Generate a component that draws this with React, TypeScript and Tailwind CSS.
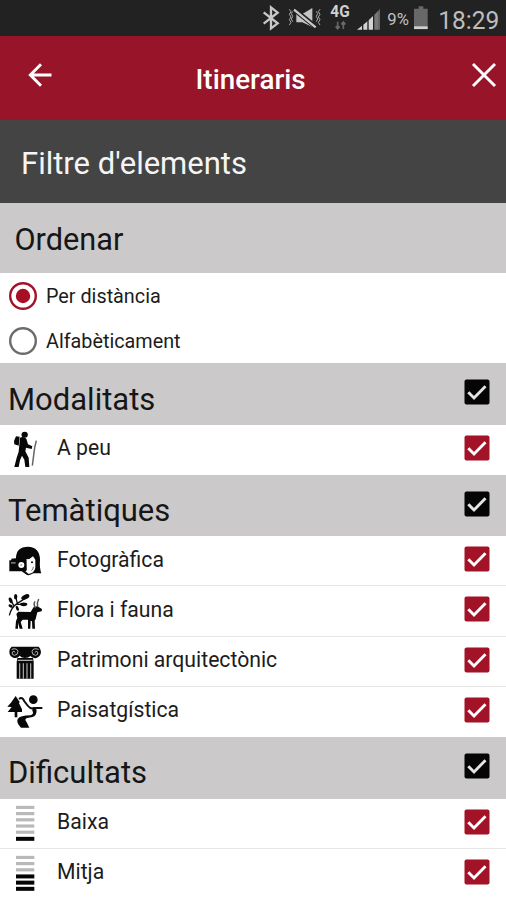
import type { ReactNode } from 'react';

function StatusBar() {
  return (
    <div className="flex h-9 items-center bg-[#222222] text-[#c4c4c4]">
      <svg className="h-9 w-[128px] ml-[250px] shrink-0" viewBox="0 0 384 108" fill="none">
        <path d="M41 37 L83 70 L63 85 V22 L83 38 L41 71" stroke="#c8c8c8" strokeWidth="7" />
        <path d="M118 28 l5 7 l-5 8 l5 8 l-5 8 l5 8 l-5 8 M128 34 l-4 7 l4 8 l-4 8 l4 8 M210 28 l-5 7 l5 8 l-5 8 l5 8 l-5 8 l5 8 M199 34 l4 7 l-4 8 l4 8 l-4 8" stroke="#aaa" strokeWidth="3" />
        <path d="M139 42 h18 l30 -18 v57 l-30 -14 h-18z" fill="#c4c4c4" />
        <path d="M132 28 L199 82" stroke="#222" strokeWidth="15" />
        <path d="M132 29 L197 82" stroke="#c8c8c8" strokeWidth="7" />
        <text x="241" y="52" fill="#d0d0d0" fontFamily="Roboto, sans-serif" fontSize="48" fontWeight="700" textLength="58" lengthAdjust="spacingAndGlyphs">4G</text>
        <path d="M263 65 v21 M257 79 l6 7 l6 -7 M280 87 v-21 M274 73 l6 -7 l6 7" stroke="#686868" strokeWidth="5" />
        <path d="M321 89 L336 77 V89z M340 74 L352 64 V89 H340z M356 61 L369 48 V89 H356z" fill="#d2d2d2" />
        <path d="M373 44 L384 33 V89 H373z" fill="#777" />
      </svg>
      <svg className="h-9 w-[128px] shrink-0" viewBox="0 0 384 108">
        <path d="M0 34 L6 26 V89 H0z" fill="#666" />
        <text x="28" y="74" fill="#c0c0c0" fontFamily="Roboto, sans-serif" fontSize="50">9%</text>
        <path d="M108 26 h14 v-7 h14 v7 h13 v62 h-41z" fill="#686868" />
        <path d="M108 79 h41 v8 h-41z" fill="#d0d0d0" />
        <text x="181" y="86" fill="#bdbdbd" fontFamily="Roboto, sans-serif" fontSize="79" textLength="183" lengthAdjust="spacingAndGlyphs">18:29</text>
      </svg>
    </div>
  );
}

function Check({ dark = false }: { dark?: boolean }) {
  return (
    <svg className="h-[26px] w-[26px] shrink-0" viewBox="0 0 26 26" fill="none">
      <rect x="0.5" y="0.5" width="25" height="25" rx="2" fill={dark ? '#050505' : '#a31328'} />
      <path d="M4.3 13.3 L10 19 L21.5 7.2" stroke={dark ? '#e4e4e4' : '#ffffff'} strokeWidth="2.9" />
    </svg>
  );
}

function Radio({ checked = false }: { checked?: boolean }) {
  return (
    <svg className="h-7 w-7 shrink-0" viewBox="0 0 28 28" fill="none">
      <circle cx="14" cy="14" r="12.8" stroke={checked ? '#a31328' : '#6c6c6c'} strokeWidth="2.4" />
      {checked && <circle cx="14" cy="14" r="7.2" fill="#a80f26" />}
    </svg>
  );
}

function SectionHeader({ title, height, top = 'pt-4' }: { title: string; height: string; top?: string }) {
  return (
    <div className={`flex items-start justify-between bg-[#cbc9ca] pl-2 pr-4 ${height}`}>
      <h2 className={`text-[31px] leading-10 text-[#161616] ${top}`}>{title}</h2>
      <div className="pt-4">
        <Check dark />
      </div>
    </div>
  );
}

function Row({ icon, label, height = 'h-[50px]', top = 'pt-2', last = false }: { icon: ReactNode; label: string; height?: string; top?: string; last?: boolean }) {
  return (
    <div className={`flex items-start bg-white pr-4 ${height} ${last ? '' : 'border-b border-[#e6e6e6]'}`}>
      {icon}
      <span className={`grow pl-[7px] text-[21.2px] leading-[30px] text-[#1c1c1c] ${top}`}>{label}</span>
      <div className="pt-[10px]">
        <Check />
      </div>
    </div>
  );
}

function Icon({ viewBox, children }: { viewBox: string; children: ReactNode }) {
  return (
    <svg className="h-[50px] w-[50px] shrink-0" viewBox={viewBox} fill="#080808">
      {children}
    </svg>
  );
}

const hiker = (
  <Icon viewBox="0 195 150 150">
    <ellipse cx="74" cy="224" rx="9.5" ry="9" />
    <path d="M48 229 L59 230 L56 257 L43 253 L42 243z" />
    <path d="M60 233 Q71 228 79 236 L84 253 L97 259 L95 267 L78 263 L76 274 L86 293 L88 321 H76 L73 299 L66 287 L60 301 L56 321 H43 L50 293 L56 275z" />
    <path d="M109 242 L104 263 L97 317" fill="none" stroke="#666" strokeWidth="4.5" />
  </Icon>
);

const photographer = (
  <Icon viewBox="0 -12 150 150">
    <path d="M48 55 Q48 20 84 20 Q119 21 120 59 Q118 84 124 100 H100 Q91 107 81 105 L65 94 H28 V61 H34 V56z" />
    <path d="M79 58 Q91 58 99 49 L106 59 L106 84 Q102 100 86 102 L76 94 L80 90z" fill="#fff" />
    <rect x="48" y="60" width="31" height="33" />
    <circle cx="64" cy="75" r="9" fill="#fff" />
    <circle cx="64" cy="75" r="3" fill="#aaa" />
    <path d="M33 66 h14 v5 h-14z" fill="#777" />
    <circle cx="96" cy="67" r="3" />
    <path d="M100 80 Q100 88 94 92" stroke="#777" strokeWidth="3" fill="none" />
  </Icon>
);

const nature = (
  <Icon viewBox="0 -12 150 150">
    <path d="M28 76 Q34 52 51 41 L79 23 M43 49 L32 31 M52 41 L47 19 M50 43 L76 43" fill="none" stroke="#111" strokeWidth="4" />
    <ellipse cx="32" cy="31" rx="5" ry="9" transform="rotate(-24 32 31)" />
    <ellipse cx="47" cy="20" rx="5" ry="8" />
    <ellipse cx="76" cy="21" rx="13" ry="7" transform="rotate(-25 76 21)" />
    <ellipse cx="71" cy="43" rx="11" ry="5.5" />
    <ellipse cx="52" cy="55" rx="4" ry="8" transform="rotate(-25 52 55)" />
    <ellipse cx="32" cy="48" rx="7" ry="4" transform="rotate(28 32 48)" />
    <path d="M49 72 L55 65 L92 66 L101 51 L112 49 L126 57 L125 64 L112 67 L107 87 L104 92 L105 116 H97 L96 94 L92 92 L91 116 H84 L84 89 H68 L62 96 L68 116 H59 L54 98 L54 116 H46 L48 93 L52 84z" />
    <path d="M107 54 Q99 43 105 34 M113 51 Q110 38 116 27" fill="none" stroke="#555" strokeWidth="4.5" />
  </Icon>
);

const column = (
  <Icon viewBox="0 -9 150 150">
    <path d="M35 20 H116 Q123 27 123 36 Q122 49 109 54 Q98 56 91 48 Q86 54 75 54 Q64 54 59 47 Q54 56 42 54 Q28 50 28 36 Q28 25 35 20z" />
    <path d="M35 28 Q51 23 54 34 Q54 46 43 46 Q34 45 37 36 Q42 31 46 38 M116 28 Q99 23 96 34 Q96 46 107 46 Q116 45 113 36 Q108 31 104 38" fill="none" stroke="#b4b4b4" strokeWidth="3" />
    <path d="M52 54 H99 L101 66 V116 H50 V66z" />
    <path d="M53 61 H98 M59 70 V116 M70 70 V116 M81 70 V116 M92 70 V116" fill="none" stroke="#b0b0b0" strokeWidth="3.5" />
  </Icon>
);

const landscape = (
  <Icon viewBox="0 6 150 150">
    <circle cx="100" cy="44" r="13" />
    <path d="M47 33 L59 51 L57 55 L66 73 L66 81 H52 V97 H44 V81 H23 L35 66 L22 65 L34 52z" />
    <path d="M57 42 Q67 34 73 49 L84 63 Q93 74 103 69 H127" fill="none" stroke="#111" strokeWidth="6" />
    <path d="M98 67 L110 74 Q110 93 97 96 L79 100 Q73 104 80 112 L88 128 H63 Q48 113 53 102 Q60 91 92 91 Q103 86 97 77z" />
  </Icon>
);

function LevelIcon({ active }: { active: number }) {
  return (
    <Icon viewBox="0 0 150 150">
      {[0, 1, 2, 3, 4, 5].map((i) => (
        <rect key={i} x="48" y={20.5 + i * 18.6} width="55" height={i >= 6 - active ? 12 : 9.5} fill={i >= 6 - active ? '#050505' : '#b9b9b9'} />
      ))}
    </Icon>
  );
}

export default function App() {
  return (
    <main className="h-[900px] w-[506px] overflow-hidden bg-white font-[Roboto,sans-serif]">
      <StatusBar />
      <header className="flex h-[84px] items-start bg-[#981428] text-white">
        <svg className="ml-7 mt-[27px] h-6 w-6 shrink-0" viewBox="0 0 24 24" fill="none" stroke="#fff" strokeWidth="2.9">
          <path d="M13 1.2 L2.3 12 L13 22.8 M2 12 H23.5" />
        </svg>
        <h1 className="grow pl-[143.5px] pt-6 text-[27.8px] font-medium leading-10">Itineraris</h1>
        <svg className="mr-[9px] mt-[26px] h-[26px] w-[26px] shrink-0" viewBox="0 0 26 26" fill="none" stroke="#fff" strokeWidth="2.9">
          <path d="M2 2 L24 24 M24 2 L2 24" />
        </svg>
      </header>
      <div className="h-[83px] bg-[#444444] pl-[21px] pt-6 text-[31px] leading-10 text-[#f5f5f5]">Filtre d'elements</div>
      <h2 className="h-[70px] bg-[#cbc9ca] pl-[14.5px] pt-[17px] text-[30.7px] leading-10 text-[#161616]">Ordenar</h2>
      <div className="h-[90px] bg-white text-[19.8px] text-[#1c1c1c]">
        <div className="flex h-[45px] items-center gap-[9px] pl-[9px]">
          <Radio checked />
          <span className="pt-[3px]">Per distància</span>
        </div>
        <div className="flex h-[45px] items-center gap-[9px] pl-[9px]">
          <Radio />
          <span className="pt-[3px]">Alfabèticament</span>
        </div>
      </div>
      <SectionHeader title="Modalitats" height="h-[62px]" top="pt-[17px]" />
      <Row icon={hiker} label="A peu" top="pt-2" last />
      <SectionHeader title="Temàtiques" height="h-[61px]" />
      <Row icon={photographer} label="Fotogràfica" top="pt-[9px]" />
      <Row icon={nature} label="Flora i fauna" height="h-[51px]" top="pt-[9px]" />
      <Row icon={column} label="Patrimoni arquitectònic" />
      <Row icon={landscape} label="Paisatgística" last />
      <SectionHeader title="Dificultats" height="h-[62px]" />
      <Row icon={<LevelIcon active={1} />} label="Baixa" />
      <Row icon={<LevelIcon active={3} />} label="Mitja" height="h-[51px]" last />
    </main>
  );
}
